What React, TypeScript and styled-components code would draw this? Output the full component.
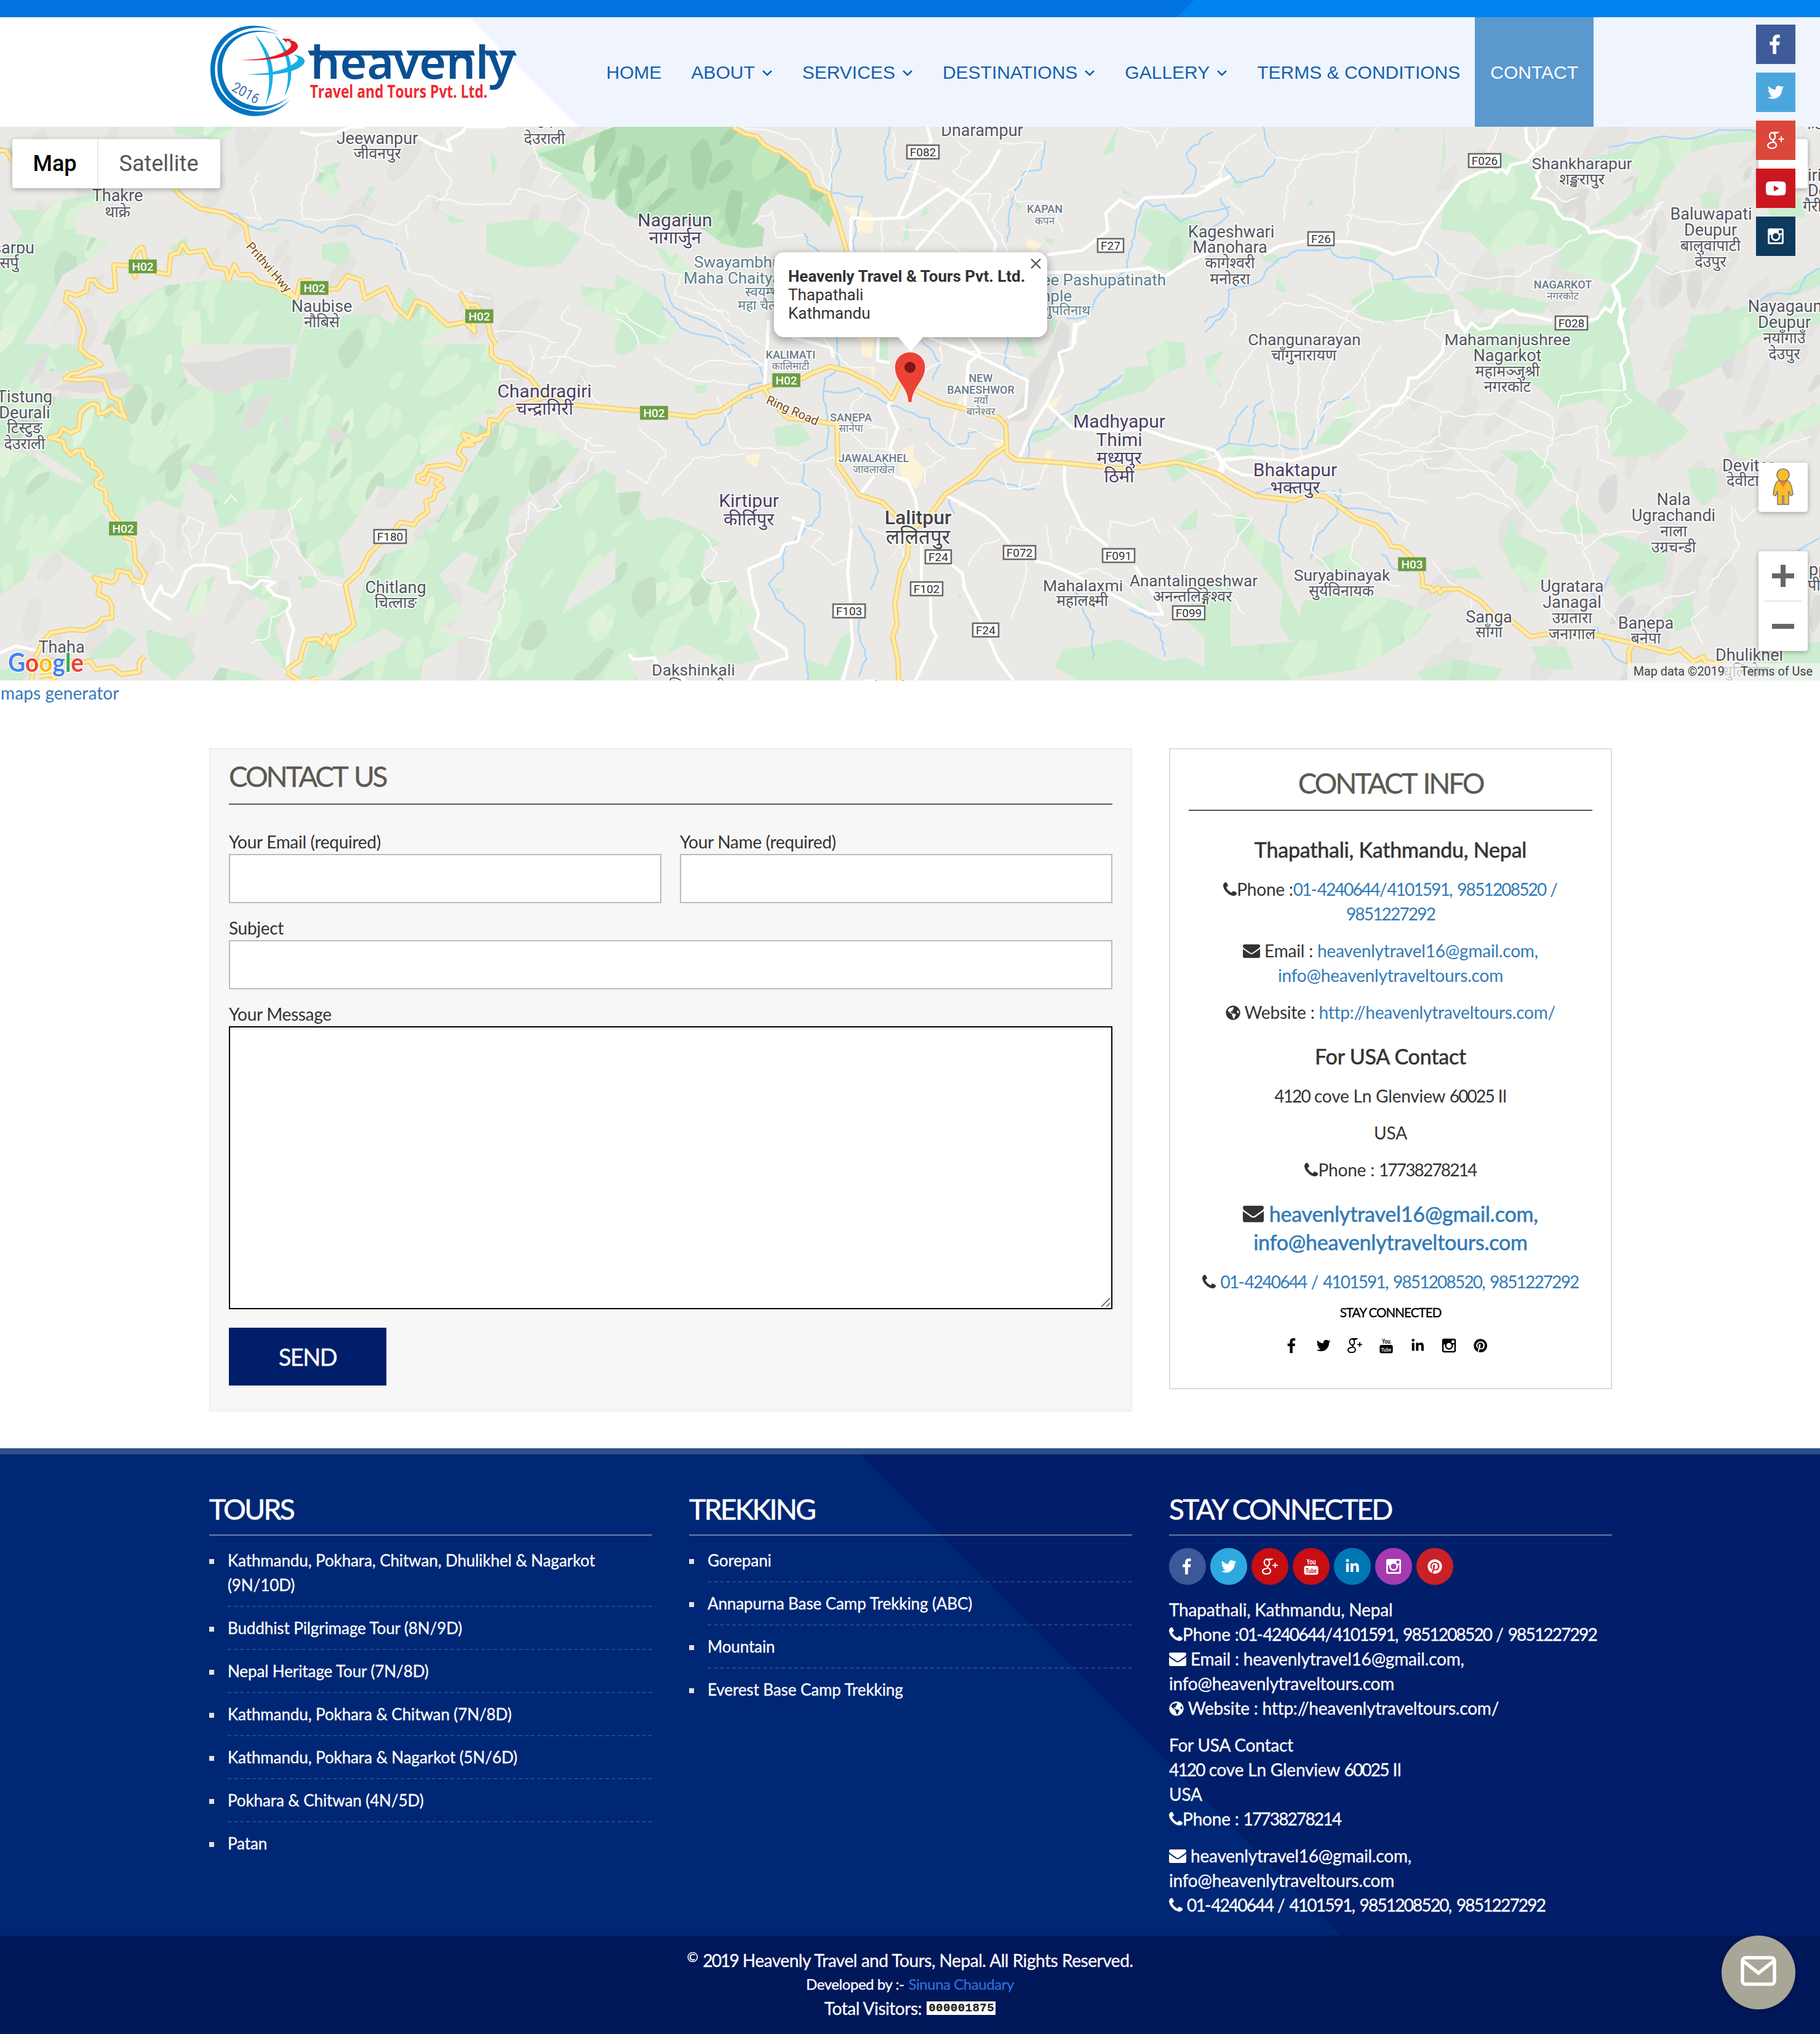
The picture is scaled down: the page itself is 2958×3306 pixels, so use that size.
import React from "react";
import styled, { createGlobalStyle } from "styled-components";
import { FaGlobeAmericas, FaLinkedinIn, FaPinterest, FaYoutube } from "react-icons/fa";

const Global = createGlobalStyle`
  *, *::before, *::after { box-sizing: border-box; }
  html, body { margin: 0; padding: 0; }
  body { font-family: Lato, "Open Sans", sans-serif; font-size: 28px; line-height: 40px; letter-spacing: -0.2px; color: #333; background: #fff; }
  a { color: #337ab7; text-decoration: none; }
  p, h2, h3, h4, ul { margin: 0; padding: 0; font-weight: 400; }
`;

/* ---------- text with tight figures ---------- */

const Figures = styled.span`
  letter-spacing: -0.065em;
`;

function Num({ children }: { children: string }) {
  return (
    <>
      {children.split(/(\d[\d]*)/).map((part, i) => (i % 2 ? <Figures key={i}>{part}</Figures> : part))}
    </>
  );
}

/* ---------- icons ---------- */

type IconName = "facebook" | "twitter" | "gplus" | "youtube" | "play" | "linkedin" | "instagram" | "pinterest" | "phone" | "envelope" | "globe";

const IconBox = styled.svg<{ $size: number; $drop?: number }>`
  width: ${(p) => p.$size}px;
  height: ${(p) => p.$size}px;
  fill: currentColor;
  vertical-align: ${(p) => p.$drop ?? -3}px;
  flex: none;
`;

function Icon({ name, size = 28 }: { name: IconName; size?: number }) {
  switch (name) {
    case "facebook":
      return (
        <IconBox $size={size} viewBox="0 0 1792 1792">
          <path d="M1343 140v264h-157q-86 0-116 36t-30 108v189h293l-39 296h-254v759h-306v-759h-255v-296h255v-218q0-186 104-288.5t277-102.5q147 0 228 12z" transform="translate(-90 -60)" />
        </IconBox>
      );
    case "twitter":
      return (
        <IconBox $size={size} viewBox="0 0 1792 1792">
          <path d="M1684 408q-67 98-162 167 1 14 1 42 0 130-38 259.5t-115.5 248.5-184.5 210.5-258 146-323 54.5q-271 0-496-145 35 4 78 4 225 0 401-138-105-2-188-64.5t-114-159.5q33 5 61 5 43 0 85-11-112-23-185.5-111.5t-73.5-205.5v-4q68 38 146 41-66-44-105-115t-39-154q0-88 44-163 121 149 294.5 238.5t371.5 99.5q-8-38-8-74 0-134 94.5-228.5t228.5-94.5q140 0 236 102 109-21 205-78-37 115-142 178 93-10 186-50z" />
        </IconBox>
      );
    case "gplus":
      return (
        <IconBox $size={size} viewBox="0 0 28 28">
          <g fill="none" stroke="currentColor" strokeWidth="2.1">
            <ellipse cx="9" cy="7.8" rx="4.2" ry="5.4" transform="rotate(-12 9 7.800)" />
            <path d="M8 2h9.500l-2.200 1.400h-3" strokeWidth="1.700" />
            <path d="M11.500 13c-2.400 2-1.200 3 .8 4.200 5 3.400 2.600 9-4 9-6.600 0-8.200-5.800-3.400-8 1.800-.8 3.600-1 5.600-1.200" />
            <path d="M22.500 8v8.500M18.200 12.200h8.600" strokeWidth="1.900" />
          </g>
        </IconBox>
      );
    case "youtube":
      return (
        <IconBox $size={size} viewBox="0 0 28 28">
          <defs>
            <mask id="tube">
              <rect width="28" height="28" fill="#fff" />
              <text x="5" y="24.500" fontSize="10.500" fontWeight="700" fontFamily="Liberation Sans, sans-serif" letterSpacing="0" textLength="18" lengthAdjust="spacingAndGlyphs" fill="#000">Tube</text>
            </mask>
          </defs>
          <text x="6.500" y="10.500" fontSize="12" fontWeight="700" fontFamily="Liberation Sans, sans-serif" letterSpacing="0" textLength="15" lengthAdjust="spacingAndGlyphs">You</text>
          <rect x="2.500" y="13" width="23" height="14.500" rx="3.500" mask="url(#tube)" />
        </IconBox>
      );
    case "instagram":
      return (
        <IconBox $size={size} viewBox="0 0 28 28">
          <path fillRule="evenodd" d="M5 2h18a3 3 0 0 1 3 3v18a3 3 0 0 1-3 3H5a3 3 0 0 1-3-3V5a3 3 0 0 1 3-3zM4.700 12v10.300a1 1 0 0 0 1 1h16.600a1 1 0 0 0 1-1V12h-2.400a7.200 7.200 0 1 1-13.800 0zM14 9.400a4.600 4.600 0 1 0 0 9.200 4.600 4.600 0 0 0 0-9.200zM19.600 4.800a1 1 0 0 0-1 1v2.800a1 1 0 0 0 1 1h2.800a1 1 0 0 0 1-1V5.800a1 1 0 0 0-1-1z" />
        </IconBox>
      );
    case "phone":
      return (
        <IconBox $size={size * 0.79} $drop={0} viewBox="0 128 1408 1408">
          <path d="M1408 1240q0 27-10 70.500t-21 68.500q-21 50-122 106-94 51-186 51-27 0-53-3.500t-57.500-12.500-47-14.500-55.500-20.500-49-18q-98-35-175-83-127-79-264-216t-216-264q-48-77-83-175-3-9-18-49t-20.500-55.500-14.500-47-12.500-57.500-3.500-53q0-92 51-186 56-101 106-122 25-11 68.500-21t70.500-10q14 0 21 3 18 6 53 76 11 19 30 54t35 63.500 31 53.500q3 4 17.500 25t21.500 35.500 7 28.500q0 20-28.500 50t-62 55-62 53-28.500 46q0 9 5 22.500t8.500 20.500 14 24 11.500 19q76 137 174 235t235 174q2 1 19 11.500t24 14 20.500 8.500 22.500 5q18 0 46-28.500t53-62 55-62 50-28.500q14 0 28.500 7t35.500 21.500 25 17.500q25 15 53.500 31t63.500 35 54 30q70 35 76 53 3 7 3 21z" />
        </IconBox>
      );
    case "envelope":
      return (
        <IconBox $size={size} viewBox="0 0 1792 1792">
          <path d="M1792 710v794q0 66-47 113t-113 47h-1472q-66 0-113-47t-47-113v-794q44 49 101 87 362 246 497 345 57 42 92.500 65.500t94.500 48 110 24.500h2q51 0 110-24.500t94.500-48 92.500-65.500q170-123 498-345 57-39 100-87zm0-294q0 79-49 151t-122 123q-376 261-468 325-10 7-42.500 31t-54 38.500-52 32.500-57.500 27-50 9h-2q-23 0-50-9t-57.500-27-52-32.500-54-38.500-42.500-31q-91-64-262-182.500t-205-142.500q-62-42-117-115.500t-55-136.500q0-78 41.500-130t118.500-52h1472q65 0 112.500 47t47.500 113z" />
        </IconBox>
      );
    case "globe":
      return <IconBox as={FaGlobeAmericas} $size={size * 0.86} $drop={-2} />;
    case "play":
      return <IconBox as={FaYoutube} $size={size * 1.15} />;
    case "linkedin":
      return <IconBox as={FaLinkedinIn} $size={size * 0.86} />;
    case "pinterest":
      return <IconBox as={FaPinterest} $size={size * 0.86} />;
  }
}

/* ---------- header ---------- */

const Page = styled.div`
  position: relative;
  width: 2958px;
  height: 3306px;
  overflow: hidden;
  display: flex;
  flex-direction: column;
`;

const TopBar = styled.div`
  height: 28px;
  flex: none;
  background: #0073e1;
  &::after {
    content: "";
    display: block;
    height: 28px;
    margin-left: 1913px;
    background: #0084ef;
    clip-path: polygon(28px 0, 100% 0, 100% 100%, 0 100%);
  }
`;

const Header = styled.header`
  height: 178px;
  flex: none;
  display: flex;
  justify-content: space-between;
  padding: 0 368px 0 339px;
  background: #f0f5fd;
  position: relative;
  isolation: isolate;
  &::before {
    content: "";
    position: absolute;
    inset: 0;
    z-index: -1;
    background: #fff;
    clip-path: polygon(0 0, 763px 0, 941px 100%, 0 100%);
  }
`;

const Logo = styled.svg`
  width: 504px;
  height: 178px;
  letter-spacing: 0;
`;

const Nav = styled.nav`
  display: flex;
  font-family: "Liberation Sans", Arial, sans-serif;
  font-size: 30px;
  letter-spacing: 0;
`;

const NavItem = styled.a<{ $active?: boolean }>`
  display: flex;
  align-items: center;
  gap: 11px;
  padding: 2px ${(p) => (p.$active ? 25 : 24)}px 0;
  white-space: nowrap;
  color: ${(p) => (p.$active ? "#fff" : "#1660ad")};
  background: ${(p) => (p.$active ? "#5a98ce" : "transparent")};
`;

const Caret = styled.svg`
  width: 18px;
  height: 12px;
  margin-top: 2px;
  fill: none;
  stroke: currentColor;
  stroke-width: 2.6px;
`;

const navItems: { label: string; menu?: boolean; active?: boolean }[] = [
  { label: "HOME" },
  { label: "ABOUT", menu: true },
  { label: "SERVICES", menu: true },
  { label: "DESTINATIONS", menu: true },
  { label: "GALLERY", menu: true },
  { label: "TERMS & CONDITIONS" },
  { label: "CONTACT", active: true },
];

function BrandLogo() {
  return (
    <Logo viewBox="27 0 1512 534">
      <defs>
        <linearGradient id="ring" x1="0" x2="1">
          <stop offset="0.500" stopColor="#0074c2" />
          <stop offset="1" stopColor="#3f9bd8" />
        </linearGradient>
      </defs>
      <path fill="url(#ring)" d="M370 74C230 -5 36 60 36 258C36 470 290 560 425 402C290 525 58 440 58 258C58 80 240 10 370 74Z" />
      <path fill="url(#ring)" d="M368 86C240 30 70 90 70 252C70 440 280 520 422 386C290 490 93 420 93 252C93 100 240 40 368 86Z" />
      <path fill="#1aade6" d="M254 86C300 160 318 220 320 268C326 330 318 380 304 430C330 380 344 320 340 262C336 200 306 140 254 86Z" />
      <path fill="#1aade6" d="M348 86C394 150 412 210 413 262C416 310 410 345 397 386C424 340 432 300 430 250C426 190 398 130 348 86Z" />
      <path fill="#e31b23" d="M183 209C300 214 440 200 463 146C462 124 448 116 420 110L436 106 384 104 408 124 410 114C434 122 434 138 422 150C370 196 280 206 183 209Z" />
      <path fill="#1aade6" d="M216 278C330 290 480 270 496 216C494 196 476 186 440 182C468 194 466 206 456 216C400 262 320 276 216 278Z" />
      <text fontFamily="Roboto, sans-serif" fontSize="70" fill="#4470b0" x="0" y="0" transform="translate(136 356) rotate(29)" textLength="140" lengthAdjust="spacingAndGlyphs">2016</text>
      <path fill="#0b4f93" d="M511 163H966L976 187H522ZM991 163H1318L1326 187H1004ZM1367 163H1426L1440 187H1382ZM1444 163H1518L1530 187H1456Z" />
      <text x="524" y="300" fontFamily="Noto Sans, sans-serif" fontWeight="600" fontSize="222" fill="#0b4f93" textLength="992" lengthAdjust="spacingAndGlyphs">heavenly</text>
      <text x="521" y="393" fontFamily="Open Sans, sans-serif" fontWeight="700" fontSize="86" fill="#f0292f" textLength="866" lengthAdjust="spacingAndGlyphs">Travel and Tours Pvt. Ltd.</text>
    </Logo>
  );
}

/* ---------- map ---------- */

const MapArea = styled.section`
  position: relative;
  height: 900px;
  flex: none;
  overflow: hidden;
  background: #eae9e6;
  font-family: Roboto, "Noto Sans", sans-serif;
  letter-spacing: 0;
`;

const MapCanvas = styled.svg`
  display: block;
  width: 2958px;
  height: 900px;
`;

type Tile = { t: string; green?: string[]; forest?: string[]; grey?: string[]; built?: string[]; yellow?: string[]; white?: string[]; thin?: string[]; water?: string[] };

const tiles: Tile[] = [
  {
    t: "translate(0 0) scale(.6378 .3571)",
    green: [
      "440,577 600,577 560,640 450,610", "130,930 230,880 300,900 200,960 190,1060 280,1100 230,1180 160,1250 120,1400 60,1568 0,1568 0,1180 60,1060 20,950 120,960",
      "820,760 870,735 850,800 868,850 850,905 805,820", "640,1280 720,1320 780,1400 760,1568 260,1568 300,1420 420,1300 560,1270", "560,1568 640,1300 700,1400 740,1568",
      "1115,955 1190,1010 1150,1015", "1240,1020 1330,1000 1420,1010 1480,1080 1430,1200 1340,1220 1240,1150", "820,1110 880,1100 895,1150 870,1210 820,1180",
      "1040,1300 1110,1440 1180,1480 1060,1568 1000,1500", "1360,690 1420,640 1568,640 1568,920 1500,900 1400,760", "1480,1300 1568,1320 1568,1440 1490,1390", "960,850 920,950 940,850", "1250,680 1270,740 1255,800",
      "660,1050 710,1030 720,1060", "430,1130 480,1070 470,1180", "790,1440 960,1430 1080,1568 760,1568",
    ],
    forest: ["1530,600 1568,577 1568,915 1510,900 1500,800 1440,770 1370,700 1450,660"],
    yellow: [
      "0,685 15,685 32,735", "445,855 460,890 510,950 570,968 625,1025 632,1095 680,1220 755,1358",
      "205,1568 215,1500 195,1410 167,1370 170,1330 195,1345 220,1325 225,1275 240,1275 250,1300 275,1325 295,1320 290,1205 330,1210 345,1260 340,1170 350,1140 362,1125 375,1200 400,1240 430,1250 435,1160 455,1150 465,1110 480,1150 520,1140 540,1215 575,1225 583,1275 597,1205 610,1250 640,1250 660,1285 700,1300 725,1330 755,1358 765,1280 790,1275 800,1318 860,1315 885,1255 920,1275 930,1360 960,1330 985,1310 1010,1400 1040,1450 1060,1370 1090,1390 1110,1430 1140,1480 1185,1465 1210,1510 1200,1430 1175,1340 1190,1385 1215,1390 1245,1480 1250,1530 1265,1568",
    ],
    white: ["765,600 800,615 850,610 890,580 930,577", "1060,620 1100,660 1150,688 1140,640 1180,600 1185,577 1290,577"],
    thin: [
      "660,790 640,860 650,960 665,1000 625,990", "845,640 810,660 800,790 770,890 770,1000 850,1000 910,975 1010,1025 1040,990 1090,890 1125,910 1210,930 1300,930 1320,860 1440,910 1470,880",
      "1110,680 1120,750 1150,820 1130,900 1110,915", "1360,660 1380,760 1430,790 1400,850", "1000,1090 1030,1160 1040,1230 1100,1260 1130,1300 1170,1330 1250,1360", "1470,900 1500,960 1490,1060 1520,1090 1568,1130",
      "1450,1390 1430,1450 1480,1500 1460,1568", "1040,1090 1035,1020", "1260,1510 1330,1510 1420,1560",
    ],
    water: ["0,672 25,680 40,740", "450,855 470,890", "525,945 570,960 605,975 625,1020 660,1045 710,1000 745,1005 820,1060 860,1030 900,1025 940,1075 1010,1110 1025,1190 1035,1225"],
  },
  {
    t: "translate(1000 0) scale(.6378 .3571)",
    green: ["100,1120 160,1160 220,1290 190,1300 130,1200", "0,1250 60,1300 120,1370 140,1568 0,1568", "745,1000 750,1080 730,1110", "790,935 800,970 775,990", "1350,945 1450,990 1500,1010 1430,1240 1340,1200 1370,1110 1330,1050", "1285,850 1330,900 1295,880", "1280,577 1270,690 1240,710", "1020,920 1040,940 1020,965", "1090,1080 1120,1090 1110,1120", "1110,1440 1130,1460 1110,1530"],
    forest: ["0,577 300,577 365,640 430,700 485,790 510,860 545,890 560,960 545,1035 515,970 470,910 415,882 375,930 355,1010 380,1040 375,1120 330,1130 275,1110 230,1050 170,1010 60,1000 30,980 0,930"],
    built: ["600,980 610,1060 655,1060 660,990 640,960 580,935", "1050,1085 1090,1110 1070,1145 1045,1120", "820,840 850,860 820,855", "895,900 910,905 905,930 890,925"],
    yellow: ["300,577 330,610 360,620 380,660 405,685 420,690 450,730 470,765 490,785 505,850 543,880 565,990 590,1145"],
    white: [
      "795,577 805,640 775,725 750,870 720,990", "600,990 650,998 740,990 845,860 910,935 970,1110 965,1145", "980,680 950,780 830,1000 765,1140", "1568,800 1480,890 1350,900 1325,945 1285,910 1250,970 1255,1050 1190,1140 1100,1160", "600,990 600,1145", "1100,1240 1240,1240 1360,1220 1400,1260 1460,1190 1568,1110", "1200,1460 1175,1480 1170,1568",
    ],
    thin: [
      "320,577 400,600 480,650 520,760 545,880", "560,577 550,720 545,860", "870,640 905,690 860,780 910,830", "980,650 1090,650 1050,780 1010,860 1030,920 1110,920 1140,1060", "1300,577 1360,600 1380,670 1410,577",
      "710,600 710,760 750,780 820,830", "680,1000 680,1145", "730,1040 820,1060 880,1145", "900,890 955,880 950,970", "0,1140 60,1210 170,1250 150,1340 290,1430", "480,1070 410,1080 400,960 350,1020", "210,1320 290,1460 370,1568", "0,1450 40,1490 60,1568", "1510,740 1545,740 1540,830 1490,850", "390,1470 390,1568", "1010,860 960,1000 1000,1145",
    ],
    water: ["560,577 575,680 550,800 548,880 630,895 620,960 605,1100 610,1145", "700,577 685,700 695,820 735,810 755,750", "1095,640 1080,775 1045,780 1010,910 1000,1100", "1500,620 1455,700 1480,770 1470,840 1440,890", "1568,940 1530,960 1480,980 1440,1010 1400,930 1370,940 1345,910 1300,1230 1235,1330 1200,1440 1150,1450", "120,1245 150,1400 240,1480 330,1568", "480,1060 490,1110 520,1145"],
  },
  {
    t: "translate(1958 0) scale(.6378 .3571)",
    green: [
      "710,770 760,690 820,740 850,800 845,900 900,950 980,1050 1100,1110 1080,1200 1040,1290 900,1220 910,1130 870,1110 790,1120 740,1170 680,1060 600,1045 610,930 650,830",
      "980,720 1050,690 1100,650 1150,620 1200,640 1290,620 1405,590 1405,640 1300,660 1230,700 1180,800 1140,920 1090,960 1060,1010 980,1040 1040,960 1090,880 1110,780 1060,720 1000,760",
      "370,1370 440,1290 500,1275 540,1330 620,1340 640,1410 560,1440 480,1460 400,1430", "640,1330 720,1310 780,1340 880,1380 860,1430 700,1400", "1040,1300 1110,1150 1160,1170 1070,1420 1000,1400",
      "1000,1420 1080,1400 1085,1568 980,1568", "1240,1440 1330,1420 1400,1380 1440,1400 1330,1568 1220,1568", "75,820 105,810 90,860 70,850", "395,1120 450,1150 430,1200 395,1170", "610,590 615,700 600,830", "270,900 280,930 262,940", "480,577 500,590 490,610", "1430,930 1520,900 1530,990 1440,985", "140,1150 185,1160 190,1200 150,1190", "190,1230 210,1330 180,1320", "1500,1290 1568,1220 1568,1300 1480,1360", "1260,880 1310,880 1310,950 1270,940",
    ],
    white: [
      "0,855 45,810", "150,1160 190,1120 260,1095 370,1100 430,1120 480,1158 540,1125 560,1050 600,950 650,830 700,785 715,780 725,765 745,785 755,765 770,790 780,750 820,735 840,690 820,640 818,577", "840,690 870,650 880,600 895,577",
      "850,740 860,760 845,800 855,850 835,900 870,910 890,930 900,970 915,995 940,1000 975,1035 980,1060 1020,1050 1050,1080 1080,1080 1110,1115 1100,1180 1085,1230 1040,1300 1055,1340 1060,1420 1055,1470 1070,1520 1070,1568",
      "640,1410 650,1480 665,1510 680,1470 700,1500 730,1490 745,1450 785,1410 800,1430 840,1440 885,1460", "975,1460 1000,1450 1020,1400 1035,1420 1050,1360 1040,1300",
    ],
    thin: [
      "130,610 60,700 30,800", "150,640 180,720 240,730 300,700 390,690 380,900 360,1080", "260,700 210,850 200,1010", "380,690 420,640 440,577", "750,577 720,690", "845,577 850,680", "870,850 920,920 950,900", "960,830 1000,870 1005,915",
      "360,980 440,1010 540,1020 560,1010", "560,1100 650,1240 620,1320 560,1200", "650,1240 720,1270 800,1260 850,1190 910,1130 960,1070", "420,1200 430,1330 370,1420 320,1568", "260,1340 340,1400 460,1480", "160,1440 200,1380 300,1400 400,1500", "1160,920 1120,1050 1090,1090", "1170,920 1110,1000", "1150,1210 1190,1250 1340,1180", "60,900 100,980", "480,1460 560,1440 640,1410",
    ],
    water: ["150,577 160,660 180,720 150,800 80,830 50,760", "0,620 20,600", "0,1050 60,980 40,900", "180,1190 220,1150 260,1140 320,1130 340,1170 380,1170 430,1190 470,1240 480,1275 540,1260 590,1260 595,1180 580,1130", "180,1190 140,1280 60,1320 60,1400 40,1450 0,1510", "1030,670 1080,650 1110,650 1170,620 1240,630 1310,590 1405,600", "1568,1220 1530,1260 1510,1330 1440,1340 1400,1380"],
  },
  {
    t: "translate(0 560) scale(.6378 .3827)",
    green: [
      "0,0 190,0 240,70 190,110 60,120 100,190 150,230 300,230 340,180 300,100 280,0 480,0 460,70 480,170 560,200 680,130 740,150 760,0 1250,0 1280,130 1260,290 1200,310 1250,370 1180,420 1060,520 1040,620 960,600 900,760 860,840 880,990 830,980 770,900 740,700 640,700 600,760 560,780 540,640 480,560 460,700 400,660 360,700 330,760 260,700 200,560 100,450 0,430",
      "0,440 80,470 150,560 220,600 250,700 330,860 340,960 240,980 150,880 90,900 60,1000 0,1060", "1270,320 1400,370 1480,440 1420,570 1300,700 1290,900 1240,1060 1190,1020 1220,900 1180,880 1120,980 1180,1140 1130,1200 1040,1260 980,1210 880,1290 840,1400 760,1427 790,1260 900,1200 930,1000 980,890 1040,860 1120,740 1180,560",
      "1340,820 1440,640 1540,530 1568,560 1568,860 1450,1060 1430,1160 1330,1250 1260,1427 1240,1300 1290,1000", "1300,1280 1400,1180 1568,1000 1568,1427 1240,1427", "470,1130 500,1020 550,980 510,1150", "590,940 700,850 690,990 620,1000", "640,1060 690,1100 650,1230 700,1350 740,1400 700,1200 740,1100 640,1000", "370,1210 470,1250 500,1330 440,1427 380,1340", "300,1200 350,1250 300,1330 220,1340", "560,1370 640,1400 680,1427 540,1427", "900,1390 1100,1210 1190,1240 1080,1340 1070,1427 860,1427", "0,1380 60,1360 60,1427 0,1427", "760,985 815,985 800,1030 770,1040",
    ],
    grey: ["460,80 560,70 650,20 740,10 740,140 660,150 580,210 520,180", "610,380 640,240 700,200 660,340", "830,370 860,350 890,390 850,430", "130,190 200,140 320,110 340,180 230,210", "70,180 90,80 130,10 110,120", "720,300 740,310 735,380", "470,500 540,520 560,600 500,560"],
    yellow: [
      "205,0 205,20 225,50 240,60 258,85 225,100 200,120 180,125 165,145 200,150 240,145 265,155 270,180 280,220 305,240 310,280 320,310 300,295 285,270 265,290 250,295 250,260 235,250 215,270 205,290 200,360 180,375 160,355 150,385 125,395 160,410 165,440 180,470 195,450 210,450 215,480 235,500 235,520 250,530 260,560 245,580 245,600 270,620 270,670 280,680 285,720 300,745 315,800 320,820 340,830 345,920 355,940 370,980 362,1010 340,1000 330,970 300,960 295,1000 285,1010 240,990 255,1020 250,1060 275,1080 285,1110 285,1160 260,1165 250,1190 215,1215 180,1210 130,1225 110,1260 90,1330 80,1427",
      "80,1350 150,1340 210,1350 230,1345 245,1380 285,1370 310,1400 355,1390 355,1350 368,1325", "130,1427 150,1400 100,1410",
      "1252,0 1252,45 1270,70 1300,80 1310,100 1350,140 1385,220 1450,255 1568,272",
      "1385,225 1330,255 1290,280 1270,325 1248,320 1245,380 1230,385 1215,400 1180,380 1190,410 1225,400 1180,420 1205,425 1175,430 1168,460 1185,490 1175,530 1140,510 1090,520 1080,550 1065,560 1065,580 1085,590 1095,550 1125,570 1110,590 1130,605 1110,620 1105,655 1085,665 1090,710 1065,740 1055,765 1020,755 1000,800 965,850 940,890 920,960 880,1020 890,1100 902,1190 880,1225 860,1240 850,1290 850,1240 840,1270 830,1235 825,1275 810,1250 780,1255 770,1300 765,1340 735,1375 735,1400 765,1427", "790,1427 808,1415",
    ],
    white: ["345,1010 360,1020 370,1080 390,1120 400,1130 435,1170", "385,1110 395,1070 410,1025 415,1055 440,1070 455,1040 475,960 495,938 535,935 580,950 585,1010 615,1010 640,1035 650,1025 665,1000 700,1010 680,1030 700,1065 735,1080 740,1110 730,1130 748,1210 735,1300 730,1400", "0,1310 40,1280 95,1300"],
    thin: [
      "385,790 415,850 420,920 395,930", "420,920 440,955", "490,910 480,830 465,800 480,730 520,760 500,850 485,870", "520,930 525,860 555,800 615,800 630,900 630,980 690,990", "770,650 735,700 745,780 730,820 690,830 710,890 705,950", "730,820 770,900 800,960 820,1005 880,1020", "570,680 590,640 605,670",
      "1350,0 1360,60 1345,150", "1568,95 1500,90 1430,50 1400,120", "1400,0 1380,60 1440,50 1460,0", "1420,300 1440,350 1510,430 1540,430", "1480,130 1520,240 1550,290", "1510,470 1490,550 1410,640 1430,690 1370,710 1350,670 1340,790 1290,820 1315,890 1290,930 1285,1080 1265,1200 1250,1260 1190,1245", "1250,1260 1240,1360 1220,1427", "725,1130 690,1160 685,1240 640,1270", "1510,390 1490,440 1510,460 1568,460", "1280,80 1275,150 1320,150",
    ],
  },
  {
    t: "translate(1000 500) scale(.6378 .4082)",
    green: [
      "0,740 70,730 60,800 80,850 130,830 210,880 270,940 230,960 220,1080 300,1090 320,1160 370,1220 330,1270 370,1400 290,1427 180,1340 90,1410 30,1385 60,1485 0,1485",
      "0,0 70,10 150,60 160,100 60,110 50,170 20,190 0,180", "405,480 470,460 500,520 460,555 410,550", "200,310 235,305 235,340 205,340", "675,120 695,120 695,220 672,215", "575,1310 600,1290 595,1400 570,1485 490,1485 490,1400 540,1430", "1020,130 1060,120 1075,200 1040,190", "1110,50 1125,70 1115,110",
      "1060,490 1130,470 1200,370 1290,300 1300,240 1360,230 1350,180 1400,130 1450,140 1455,230 1390,270 1350,330 1240,380 1160,460 1090,530 1060,540", "1440,860 1485,800 1480,880 1440,890", "1400,620 1500,560 1510,610 1420,700", "1340,735 1355,735 1350,770", "895,1190 925,1240 905,1220", "740,480 760,480 755,500", "1140,1360 1200,1350 1290,1320 1400,1410 1450,1390 1510,1440 1530,1485 1180,1485 1120,1430", "1490,1080 1568,1080 1568,1370 1510,1320 1440,1230 1440,1190 1510,1170", "1320,1130 1350,1200 1330,1190", "875,1140 885,1150 872,1160", "285,1130 305,1150 290,1160", "405,1115 425,1120 415,1145",
    ],
    grey: ["1135,50 1160,80 1150,180 1110,220 1090,330 1050,450 990,455 1010,420 1040,350 1060,260 1100,190"],
    built: ["735,560 760,545 760,600 790,640 770,720 730,690 720,620", "625,120 660,120 655,200 630,190", "330,590 370,580 360,640 335,610", "615,50 660,120 620,130", "870,760 895,780 875,800", "700,1000 730,930 710,990", "960,540 1000,530 980,570", "1095,570 1115,570 1100,640", "850,480 880,350 890,360 840,510", "1100,380 1140,345 1120,400", "650,230 665,240 655,290"],
    yellow: [
      "0,403 60,410 200,435 225,418 265,412 330,345 380,318 480,280 495,265 545,235 590,250 670,310 705,365 725,300", "765,330 830,380 890,403 975,435 995,470 998,580 1020,605 1140,618 1280,640 1350,635 1430,615 1470,630 1540,665 1568,700",
      "380,318 395,370 440,440 525,455 565,465 567,625 620,745 680,775 715,830 750,880 745,990 728,1045 712,1180 718,1260 707,1310 720,1400 722,1485", "998,550 950,600 915,665 840,745 805,820 760,880",
    ],
    white: [
      "1145,625 1145,700 1150,740 1190,870 1255,950", "1100,385 1165,480 1240,490 1350,485 1410,520 1530,570 1545,610 1568,600", "1530,570 1550,640 1540,670", "845,750 940,830 970,870 1005,940", "1070,1010 1105,1020 1165,1060 1300,1170 1360,1220 1395,1220 1375,1150 1325,1030", "390,50 385,200 380,318", "450,118 550,160 555,200", "710,365 695,390 720,480 700,560 710,580", "625,740 660,670", "710,670 745,690 765,760 770,830", "602,880 592,1050 600,1180", "600,1236 605,1340 580,1485", "780,940 780,1090", "803,1148 805,1270 818,1310 765,1485", "855,1020 885,1060 890,1120 920,1210 950,1310 975,1400 1015,1485",
      "450,835 480,850 465,930 430,945 420,985 340,1040 350,1150 365,1220 355,1280 435,1360 438,1395 360,1430 340,1485", "35,1380 45,1400 100,1395 110,1430 150,1450 180,1485", "800,120 920,190 1050,290 1045,400 1000,440", "900,120 930,180 900,220 890,400", "670,120 668,210 700,220", "1170,60 1165,160 1130,180 1140,250 1100,380 1060,480 1030,600",
    ],
    thin: [
      "180,0 260,60 300,180 380,230", "190,260 240,210 370,230", "100,200 180,280 340,310", "60,480 130,570 80,700 30,650", "260,350 290,470 320,560 400,560 470,610", "120,750 200,600 330,580", "470,620 600,590", "400,630 440,700 500,720", "540,640 590,740 600,870", "640,480 690,480 690,560", "600,500 640,560 700,570", "790,540 840,600 790,640 790,700", "900,480 950,520 1000,530", "980,640 1000,720 1030,720 1040,640", "480,870 530,900 500,950 555,1025 590,1000", "640,880 720,930 740,1000 760,1060", "900,1030 930,950 980,920", "1010,1240 1040,1100 1050,1000", "1100,870 1110,1000", "1150,940 1160,870 1200,890", "1260,930 1260,850 1320,870 1370,840 1390,900", "1530,590 1450,630 1500,700 1568,800", "1100,620 1080,700 1030,720", "1160,1070 1230,1040 1300,1100 1330,1150", "1420,870 1470,960 1450,1040", "830,120 830,220 790,250", "870,160 940,180 1040,200", "220,900 260,980 220,1060 240,1100 290,1090", "1440,1210 1400,1270 1370,1250", "0,0 60,70 130,120", "530,120 600,240 650,240", "640,330 600,400 620,450 680,480", "870,420 850,520 880,560 920,560",
    ],
    water: ["565,118 570,240 535,280 530,330 540,450 540,560 480,620 475,690 520,740 520,830 430,960 425,1050 390,1100 410,1160 480,1260 490,1485", "530,330 570,340 620,320 700,390 760,420 800,440 810,490 860,550 895,540 900,500 930,490", "1230,330 1290,270 1220,360 1130,430 1110,480 1060,510 1050,600", "120,0 180,90 260,120 330,180 370,240 380,300 340,310 350,360 300,370 280,450 240,540 220,550 180,450", "850,740 900,700 960,680 1050,725 1070,720", "640,1190 620,1270 640,1400 620,1470", "1170,1130 1200,1230 1220,1290 1215,1400", "1000,120 990,220 1040,280", "1310,1200 1370,1240 1390,1300 1400,1390", "850,750 865,820", "620,870 655,960 670,1050 650,1120", "780,130 830,220 810,290"],
  },
  {
    t: "translate(1958 500) scale(.6378 .4082)",
    green: [
      "680,60 870,70 1060,60 1080,170 1070,330 900,400 860,330 800,270 690,200 660,120", "1070,60 1100,330 1200,440 1240,500 1180,560 1100,600 1040,590 1020,480 1030,400 960,330", "380,20 640,10 560,50 440,55", "75,830 100,815 150,920 190,950 200,1100 230,1200 260,1300 220,1330 190,1260 200,1130 140,1020 80,900",
      "750,570 840,570 900,640 860,740 820,800 790,740 800,630", "905,840 940,780 1000,870 1000,900 920,900", "1000,920 1050,905 1180,970 1170,1090 1080,1130 1060,1160 1030,1070 1060,980", "780,830 790,900 870,960 880,1040 840,1140 780,1040 760,940", "160,410 230,420 230,520 190,490", "365,375 385,380 375,480 340,545 280,545 310,490", "1160,1240 1240,1140 1250,1260 1200,1290", "1230,640 1300,640 1310,740 1270,790 1240,730",
      "0,1290 60,1350 150,1340 230,1330 250,1170 350,1140 480,1160 580,1220 540,1300 440,1400 390,1440 200,1485 0,1485", "540,1450 640,1400 760,1440 740,1485 560,1485", "830,1350 920,1350 940,1440 860,1440", "620,1050 690,1030 710,1080 640,1080", "1320,500 1430,480 1568,380 1568,460 1420,560 1400,620 1340,570", "1310,80 1568,10 1568,60 1400,120 1340,200 1290,260 1180,330 1200,180", "1350,1400 1568,1330 1568,1485 1340,1485", "0,200 50,170 20,260 50,320 10,290", "50,545 120,560 130,590 50,590", "280,1010 370,940 400,1040 330,1060",
    ],
    yellow: ["0,645 40,670 80,710 130,750 230,768 265,748 305,750 385,840 435,865 460,905 475,950 500,955 525,990 550,1040 555,1080 555,1110 575,1115 580,1130 595,1115 600,1135 610,1120 650,1120 700,1165 740,1230 780,1245 830,1310 870,1300 1000,1303 1100,1340 1185,1375 1210,1360 1245,1410 1270,1390 1275,1410 1320,1420", "1090,1345 1080,1370 1083,1430"],
    white: ["640,10 640,60 660,80 665,105", "610,130 605,180 570,240 540,280 520,280 515,330 490,385 450,395 345,550 290,580 220,610 115,595 45,608 25,570 0,555", "45,610 60,640 95,665 130,670", "45,610 35,665", "1070,0 1060,40 1075,150 1080,180 1060,230 1070,300 1070,330"],
    thin: [
      "70,120 80,30 60,0", "140,150 80,260 40,400", "230,130 240,300 230,420 250,610", "160,220 180,420 200,610", "330,160 300,300 280,540", "400,250 420,400 330,440", "450,150 390,300 300,430", "580,0 560,80 610,130", "650,160 540,320 430,480", "500,350 640,430 740,420 820,490 880,520", "800,370 880,430 890,500 860,640", "600,430 600,510 540,560 390,490", "390,590 550,570 700,560 830,490", "390,600 470,650 580,600", "600,540 650,580 740,700 780,760 850,890 930,900 970,960 1020,900 1130,890", "550,590 570,640 700,650 740,670", "470,650 470,750 570,780", "900,400 910,350 1000,330 1070,330", "1070,340 1090,370 1050,400 1020,490 1030,560", "1000,470 1000,600 1050,640", "880,530 1000,470", "640,760 700,740 780,800", "300,740 410,740 520,860 510,920", "400,870 370,990 420,1080 500,1110", "960,960 990,1060 1020,1200 1060,1260", "1250,1130 1170,1160 1090,1290", "1280,1190 1240,1240 1270,1340", "1340,790 1360,960 1280,1120", "960,940 950,740 900,700 880,640 830,560", "20,820 120,840 50,1000 40,1100 100,1220", "290,860 270,960 320,1050", "1430,600 1460,560 1545,510", "1350,800 1370,850 1420,780 1480,770", "580,1010 620,1090 680,1150 680,1240",
    ],
    water: ["20,580 60,540 80,440 110,390", "60,540 260,560 290,470 310,380 370,355", "110,540 130,390 150,370", "210,780 190,900 200,970 225,1000", "0,640 120,740 180,720 330,730 350,790 470,820 490,860", "345,720 340,820 290,900 270,1000", "450,980 480,1040 520,1050", "1568,915 1530,950 1510,970", "980,1110 1000,1180 1030,1070", "1000,1270 1050,1400 1080,1420", "0,60 50,0"],
  },
];

function rng(seed: number) {
  let s = seed;
  return () => {
    s = (s * 1664525 + 1013904223) % 4294967296;
    return s / 4294967296;
  };
}

function ridges(seed: number, n: number, box: [number, number, number, number], size: number) {
  const r = rng(seed);
  let d = "";
  for (let i = 0; i < n; i++) {
    const cx = box[0] + r() * box[2];
    const cy = box[1] + r() * box[3];
    const a = -1.1 + (r() - 0.5) * 0.9;
    const len = size * (0.5 + r());
    const wid = len * (0.2 + r() * 0.35);
    const pts: [number, number][] = [];
    for (let k = 0; k < 10; k++) {
      const t = (k / 10) * Math.PI * 2;
      const m = 0.65 + r() * 0.5;
      const px = Math.cos(t) * len * m;
      const py = Math.sin(t) * wid * m;
      pts.push([cx + px * Math.cos(a) - py * Math.sin(a), cy + px * Math.sin(a) + py * Math.cos(a)]);
    }
    pts.forEach((p, k) => {
      const q = pts[(k + 1) % pts.length];
      const mid = `${((p[0] + q[0]) / 2).toFixed(0)} ${((p[1] + q[1]) / 2).toFixed(0)}`;
      d += k ? `Q${p[0].toFixed(0)} ${p[1].toFixed(0)} ${mid}` : `M${mid}`;
    });
    d += "Z";
  }
  return d;
}

/* Breaks the segments of a lane into small irregular steps. */
function wiggle(points: string, seed: number, amp: number) {
  const r = rng(seed * 7919 + 13);
  const pts = points.split(" ").map((p) => p.split(",").map(Number));
  const out: string[] = [];
  pts.forEach((p, i) => {
    out.push(p.join(","));
    const q = pts[i + 1];
    if (!q) return;
    const steps = Math.floor(Math.hypot(q[0] - p[0], q[1] - p[1]) / 18);
    for (let k = 1; k < steps; k++) {
      const f = k / steps;
      out.push(`${(p[0] + (q[0] - p[0]) * f + (r() - 0.5) * amp).toFixed(1)},${(p[1] + (q[1] - p[1]) * f + (r() - 0.5) * amp * 1.6).toFixed(1)}`);
    }
  });
  return out.join(" ");
}

const Land = styled.polygon<{ $fill: string }>`
  fill: ${(p) => p.$fill};
`;

const Way = styled.polyline<{ $color: string; $w: number }>`
  fill: none;
  stroke: ${(p) => p.$color};
  stroke-width: ${(p) => p.$w}px;
  stroke-linejoin: round;
  vector-effect: non-scaling-stroke;
`;

const LabelText = styled.text<{ $size: number; $color: string; $weight?: number }>`
  font-family: Roboto, "Noto Sans", sans-serif;
  font-size: ${(p) => p.$size}px;
  font-weight: ${(p) => p.$weight ?? 400};
  fill: ${(p) => p.$color};
  stroke: rgba(255, 255, 255, 0.85);
  stroke-width: 4px;
  stroke-linejoin: round;
  paint-order: stroke;
`;

const town = "#53565f";
const city = "#4b3f63";
const sight = "#5e7e8c";
const quarter = "#6b7a89";

type Label = [number, number, string, number?, string?, number?, ("start" | "middle" | "end")?];

const labels: Label[] = [
  [613, 234, "Jeewanpur"], [613, 258, "जीवनपुर", 25], [885, 208, "उन", 25], [885, 234, "देउराली", 25],
  [191, 327, "Thakre"], [191, 353, "थाक्रे", 25], [56, 412, "sarpu", 27, town, 400, "end"], [15, 436, "सर्पु", 25],
  [523, 507, "Naubise"], [523, 532, "नौबिसे", 25],
  [40, 654, "Tistung"], [40, 680, "Deurali"], [40, 704, "टिस्टुङ", 25], [40, 730, "देउराली", 25],
  [885, 646, "Chandragiri", 30, city], [885, 674, "चन्द्रागिरी", 29, city],
  [643, 964, "Chitlang"], [643, 988, "चित्लाङ", 25], [100, 1061, "Thaha"],
  [1097, 368, "Nagarjun", 30, city], [1097, 396, "नागार्जुन", 29, city],
  [1128, 435, "Swayambhu", 26, sight, 400, "start"], [1111, 461, "Maha Chaitya", 26, sight, 400, "start"], [1211, 482, "स्वयम्भू", 22, sight, 400, "start"], [1199, 504, "महा चैत्य", 22, sight, 400, "start"],
  [1698, 346, "KAPAN", 18, quarter, 500], [1698, 365, "कपन", 17, quarter], [1596, 221, "Dharampur"],
  [1895, 464, "Shree Pashupatinath", 26, sight, 400, "end"], [1742, 490, "Temple", 26, sight, 400, "end"], [1772, 512, "पशुपतिनाथ", 22, sight, 400, "end"],
  [2001, 386, "Kageshwari"], [1999, 411, "Manohara"], [1999, 436, "कागेश्वरी", 25], [1999, 462, "मनोहरा", 25],
  [2571, 275, "Shankharapur", 26.5], [2571, 300, "शङ्खरापुर", 25],
  [2781, 357, "Baluwapati"], [2780, 383, "Deupur"], [2780, 408, "बालुवापाटी", 25], [2780, 434, "देउपुर", 25],
  [2540, 469, "NAGARKOT", 18, quarter, 500], [2540, 487, "नगरकोट", 17, quarter],
  [2901, 507, "Nayagaun"], [2900, 533, "Deupur"], [2900, 558, "नयाँगाउँ", 25], [2900, 584, "देउपुर", 25],
  [2938, 294, "iri", 27, town, 400, "start"], [2938, 319, "Deu", 27, town, 400, "start"], [2930, 344, "गैरी", 25, town, 400, "start"], [2930, 210, "फट", 25, town, 400, "start"],
  [2120, 561, "Changunarayan", 26.5], [2119, 586, "चाँगुनारायण", 25],
  [2450, 561, "Mahamanjushree", 26.5], [2450, 587, "Nagarkot"], [2450, 612, "महामञ्जुश्री", 25], [2450, 637, "नगरकोट", 25],
  [2105, 774, "Bhaktapur", 30, city], [2105, 802, "भक्तपुर", 29, city],
  [2181, 944, "Suryabinayak", 26.5], [2180, 969, "सुर्यविनायक", 25],
  [2555, 962, "Ugratara"], [2555, 988, "Janagal"], [2555, 1013, "उग्रतारा", 25], [2555, 1039, "जनागाल", 25],
  [2420, 1012, "Sanga"], [2420, 1036, "साँगा", 25], [2675, 1022, "Banepa"], [2675, 1046, "बनेपा", 25],
  [2720, 821, "Nala"], [2720, 847, "Ugrachandi"], [2720, 872, "नाला", 25], [2720, 898, "उग्रचन्डी", 25],
  [2799, 766, "Devitar", 27, town, 400, "start"], [2806, 790, "देवीटार", 25, town, 400, "start"],
  [2788, 1074, "Dhulikhel", 27, town, 400, "start"], [2800, 1100, "धुलिखेल", 25, town, 400, "start"], [2940, 935, "pp", 27, town, 400, "start"], [2938, 960, "पी", 25, town, 400, "start"],
  [1285, 583, "KALIMATI", 18, quarter, 500], [1285, 601, "कालिमाटी", 17, quarter], [1383, 685, "SANEPA", 18, quarter, 500], [1383, 702, "सानेपा", 17, quarter],
  [1594, 621, "NEW", 18, quarter, 500], [1594, 640, "BANESHWOR", 18, quarter, 500], [1594, 657, "नयाँ", 17, quarter], [1594, 675, "बानेश्वर", 17, quarter],
  [1420, 751, "JAWALAKHEL", 18, quarter, 500], [1420, 769, "जावलाखेल", 17, quarter],
  [1819, 695, "Madhyapur", 30, city], [1819, 725, "Thimi", 30, city], [1819, 754, "मध्यपुर", 29, city], [1819, 784, "ठिमी", 29, city],
  [1217, 824, "Kirtipur", 30, city], [1217, 854, "कीर्तिपुर", 29, city],
  [1492, 852, "Lalitpur", 32, "#41444c", 500], [1492, 884, "ललितपुर", 33, "#41444c"],
  [1760, 961, "Mahalaxmi", 26.5], [1759, 985, "महालक्ष्मी", 25], [1940, 953, "Anantalingeshwar", 26], [1938, 978, "अनन्तलिङ्गेश्वर", 25],
  [1127, 1098, "Dakshinkali", 26.5], [1126, 1124, "दक्षिणकाली", 25], [1450, 1126, "Thecho"],
];

const shields: [number, number, string][] = [
  [232, 433, "H02"], [511, 468, "H02"], [779, 514, "H02"], [200, 859, "H02"], [1278, 618, "H02"], [1063, 671, "H02"], [2295, 917, "H03"],
  [634, 872, "F180"], [1805, 399, "F27"], [1500, 247, "F082"], [2413, 261, "F026"], [2147, 388, "F26"], [2554, 525, "F028"], [1525, 905, "F24"], [1657, 898, "F072"], [1818, 903, "F091"],
  [1506, 957, "F102"], [1380, 993, "F103"], [1602, 1024, "F24"], [1932, 996, "F099"],
];

function Shield({ x, y, code }: { x: number; y: number; code: string }) {
  const highway = code[0] === "H";
  const w = highway ? 45 : code.length === 4 ? 52 : 42;
  return (
    <g>
      <rect x={x - w / 2} y={y - 11} width={w} height={22} fill={highway ? "#6b9e43" : "#fff"} stroke={highway ? "#6b9e43" : "#666"} strokeWidth={highway ? 0.5 : 2.5} />
      <text x={x} y={y + 7} textAnchor="middle" fontFamily="Roboto, sans-serif" fontSize="19" fontWeight={highway ? 500 : 400} fill={highway ? "#fff" : "#333"}>{code}</text>
    </g>
  );
}

function Terrain() {
  return (
    <MapCanvas viewBox="0 206 2958 900">
      <defs>
        <clipPath id="hills">
          {tiles.flatMap((tile, i) => (tile.green ?? []).map((pts, k) => <polygon key={`${i}-${k}`} points={pts} transform={tile.t} />))}
        </clipPath>
        <clipPath id="woods">
          {tiles.flatMap((tile, i) => (tile.forest ?? []).map((pts, k) => <polygon key={`${i}-${k}`} points={pts} transform={tile.t} />))}
        </clipPath>
      </defs>
      <rect y="206" width="2958" height="900" fill="#eae9e6" />
      <path d={ridges(3, 90, [0, 206, 950, 900], 38)} fill="#e4e3e0" />
      <path d={ridges(5, 75, [2300, 206, 658, 900], 40)} fill="#e4e3e0" />
      <path d={ridges(9, 22, [2550, 206, 408, 900], 26)} fill="#dddcda" />
      {tiles.map((tile, i) => (
        <g key={i} transform={tile.t}>
          {tile.green?.map((p, k) => <Land key={k} points={p} $fill="#cdedd0" />)}
          {tile.forest?.map((p, k) => <Land key={k} points={p} $fill="#b6e1b8" />)}
          {tile.built?.map((p, k) => <Land key={k} points={p} $fill="#fdf3d6" />)}
        </g>
      ))}
      <g clipPath="url(#hills)">
        <path d={ridges(11, 200, [0, 206, 1250, 900], 40)} fill="#d7f2d5" />
        <path d={ridges(12, 75, [0, 206, 1250, 900], 28)} fill="#e1f4da" />
        <path d={ridges(13, 80, [0, 206, 1250, 900], 30)} fill="#c4e1c5" />
        <path d={ridges(14, 80, [1800, 206, 1158, 900], 44)} fill="#d7f2d5" />
        <path d={ridges(15, 40, [1800, 206, 1158, 900], 26)} fill="#c8e8ca" />
      </g>
      <g clipPath="url(#woods)">
        <path d={ridges(21, 36, [980, 206, 400, 420], 34)} fill="#c2e8be" />
        <path d={ridges(22, 30, [980, 206, 400, 420], 34)} fill="#a9d4ab" />
      </g>
      {tiles.map((tile, i) => (
        <g key={i} transform={tile.t}>
          {tile.grey?.map((p, k) => <Land key={k} points={p} $fill="#dfdedd" />)}
          {tile.water?.map((p, k) => <Way key={k} points={wiggle(p, k + 3, 9)} $color="#aad7fb" $w={2.6} />)}
          {tile.thin?.map((p, k) => <Way key={k} points={wiggle(p, k + 40, 9)} $color="#fbfbfa" $w={2} />)}
          {tile.white?.map((p, k) => <Way key={k} points={p} $color="#fff" $w={5} />)}
        </g>
      ))}
      {tiles.map((tile, i) => (
        <g key={i} transform={tile.t}>
          {tile.yellow?.map((p, k) => <Way key={k} points={p} $color="#f5cd6b" $w={8.5} />)}
        </g>
      ))}
      {tiles.map((tile, i) => (
        <g key={i} transform={tile.t}>
          {tile.yellow?.map((p, k) => <Way key={k} points={p} $color="#ffeba6" $w={5} />)}
        </g>
      ))}
      {labels.map(([x, y, text, size = 27, color = town, weight = 400, anchor = "middle"], i) => (
        <LabelText key={i} x={x} y={y} textAnchor={anchor} $size={size} $color={color} $weight={weight}>{text}</LabelText>
      ))}
      <LabelText x={0} y={0} transform="translate(399 401) rotate(49)" $size={20} $color="#7b4a12">Prithvi Hwy</LabelText>
      <LabelText x={0} y={0} transform="translate(1244 655) rotate(24)" $size={20} $color="#7b4a12">Ring Road</LabelText>
      {shields.map(([x, y, code], i) => <Shield key={i} x={x} y={y} code={code} />)}
      <path d="M1476 654C1475 628 1454 620 1454 597A25 25 0 0 1 1504 597C1504 620 1483 628 1482 654Z" fill="#ea4335" stroke="#fff" strokeWidth="1" />
      <circle cx="1479" cy="597" r="9" fill="#7f1411" />
      <text x="13" y="1092" fontFamily="Lato, sans-serif" fontSize="42" stroke="#fff" strokeWidth="3" paintOrder="stroke" textLength="123" lengthAdjust="spacingAndGlyphs">
        <tspan fill="#4285f4" fontWeight="700">G</tspan><tspan fill="#ea4335" fontWeight="700">o</tspan><tspan fill="#fbbc05" fontWeight="700">o</tspan><tspan fill="#4285f4" fontWeight="700">g</tspan><tspan fill="#34a853" fontWeight="700">l</tspan><tspan fill="#ea4335" fontWeight="700">e</tspan>
      </text>
    </MapCanvas>
  );
}

/* Controls float over the map canvas. */
const Floating = styled.div<{ $x: number; $y: number; $w: number; $h: number }>`
  position: absolute;
  left: ${(p) => p.$x}px;
  top: ${(p) => p.$y}px;
  width: ${(p) => p.$w}px;
  height: ${(p) => p.$h}px;
  display: flex;
  background: #fff;
  border-radius: 4px;
  box-shadow: 0 2px 8px rgba(0, 0, 0, 0.3);
`;

const MapType = styled.button<{ $on?: boolean; $w: number }>`
  width: ${(p) => p.$w}px;
  border: 0;
  padding: ${(p) => (p.$on ? "0" : "0 2px 0 0")};
  background: none;
  border-left: ${(p) => (p.$on ? "0" : "2px solid #e8e8e8")};
  font: ${(p) => (p.$on ? 500 : 400)} 36px Roboto, sans-serif;
  color: ${(p) => (p.$on ? "#000" : "#565656")};
`;

const ZoomStack = styled.div`
  flex: 1;
  display: flex;
  flex-direction: column;
  align-items: center;
`;

const ZoomKey = styled.svg`
  width: 36px;
  height: 80px;
  fill: #666;
`;

const ZoomRule = styled.div`
  width: 60px;
  height: 2px;
  background: #e6e6e6;
`;

const Pegman = styled.svg`
  margin: auto;
  width: 36px;
  height: 62px;
`;

const InfoWindow = styled.div`
  position: absolute;
  left: 1258px;
  top: 204px;
  width: 444px;
  height: 138px;
  padding: 24px 23px;
  border-radius: 16px;
  background: #fff;
  box-shadow: 0 4px 14px 2px rgba(0, 0, 0, 0.3);
  font-size: 26px;
  line-height: 30px;
  color: #333;
  &::after {
    content: "";
    position: absolute;
    left: 201px;
    top: 137px;
    width: 42px;
    height: 24px;
    background: #fff;
    clip-path: polygon(0 0, 100% 0, 50% 100%);
  }
`;

const InfoTitle = styled.strong`
  display: block;
  font-weight: 700;
  white-space: nowrap;
`;

const InfoClose = styled.svg`
  position: absolute;
  right: 10px;
  top: 10px;
  width: 17px;
  height: 17px;
  stroke: #555;
  stroke-width: 2.4px;
`;

const MapTerms = styled.div`
  position: absolute;
  right: 0;
  bottom: 0;
  height: 28px;
  display: flex;
  gap: 26px;
  padding: 0 12px 0 10px;
  background: rgba(245, 245, 245, 0.72);
  font-size: 19.8px;
  line-height: 28px;
  color: #444;
`;

const MapCredit = styled.a`
  display: block;
  height: 40px;
  flex: none;
  padding-left: 1px;
  letter-spacing: 0.1px;
`;

/* ---------- side share bar ---------- */

const ShareBar = styled.div`
  position: absolute;
  right: 40px;
  top: 40px;
  display: flex;
  flex-direction: column;
  gap: 14px;
`;

const ShareButton = styled.a<{ $bg: string }>`
  display: flex;
  align-items: center;
  justify-content: center;
  width: 64px;
  height: 64px;
  color: #fff;
  background: ${(p) => p.$bg};
`;

/* ---------- contact ---------- */

const Columns = styled.main`
  display: flex;
  align-items: flex-start;
  gap: 60px;
  flex: none;
  height: 1208px;
  padding: 70px 338px 0 340px;
`;

const FormPanel = styled.div`
  width: 1500px;
  height: 1078px;
  padding: 12px 30px 0;
  border: 2px solid #eee;
  background: #f7f7f7;
`;

const PanelTitle = styled.h2<{ $center?: boolean }>`
  height: 78px;
  font-size: 46px;
  line-height: ${(p) => (p.$center ? 66 : 64)}px;
  letter-spacing: -3.2px;
  word-spacing: 4px;
  color: #5b5951;
  text-align: ${(p) => (p.$center ? "center" : "left")};
  border-bottom: 2px solid #5b5951;
  -webkit-text-stroke: 0.3px currentColor;
`;

const Fields = styled.div`
  display: grid;
  grid-template-columns: 1fr 1fr;
  column-gap: 30px;
  row-gap: 20px;
  margin-top: 40px;
`;

const Field = styled.label<{ $wide?: boolean }>`
  display: flex;
  flex-direction: column;
  grid-column: ${(p) => (p.$wide ? "1 / -1" : "auto")};
  letter-spacing: -0.3px;
`;

const TextInput = styled.input`
  height: 80px;
  border: 2px solid #bbb;
  background: #fff;
  padding: 0 12px;
`;

const TextBox = styled.div`
  height: 460px;
  border: 2px solid #000;
  background: #fff;
  display: flex;
  align-items: flex-end;
  justify-content: flex-end;
`;

const Grip = styled.svg`
  width: 18px;
  height: 18px;
  stroke: #555;
  stroke-width: 1.6px;
`;

const SendButton = styled.button`
  margin-top: 30px;
  width: 256px;
  height: 94px;
  border: 0;
  background: #001e6a;
  color: #fff;
  font: 400 38px Lato, sans-serif;
  letter-spacing: -1.5px;
  -webkit-text-stroke: 0.4px currentColor;
`;

const InfoCard = styled.aside`
  width: 720px;
  height: 1042px;
  padding: 22px 30px 0;
  border: 2px solid #ddd;
  text-align: center;
`;

const Para = styled.p`
  margin-bottom: 20px;
  white-space: nowrap;
`;

const CardHeading = styled.h4<{ $first?: boolean }>`
  margin: ${(p) => (p.$first ? 40 : 29)}px 0 21px;
  font-size: 34px;
  line-height: 46px;
  -webkit-text-stroke: 0.6px currentColor;
  white-space: nowrap;
`;

const SmallTitle = styled.h4`
  margin-top: -5px;
  font-size: 20.5px;
  line-height: 30px;
  letter-spacing: -0.9px;
  color: #000;
  -webkit-text-stroke: 0.4px currentColor;
`;

const SmallIcons = styled.div`
  display: flex;
  justify-content: center;
  align-items: center;
  gap: 23px;
  height: 30px;
  margin-top: 24px;
  padding-right: 14px;
  color: #000;
`;

const IconCell = styled.a`
  display: flex;
  align-items: center;
  justify-content: center;
  width: 28px;
  height: 28px;
  color: inherit;
`;

/* ---------- footer ---------- */

const Footer = styled.footer`
  height: 792px;
  flex: none;
  display: flex;
  gap: 60px;
  padding: 62px 338px 0 340px;
  border-top: 10px solid #2c4e8c;
  background: #002775;
  position: relative;
  isolation: isolate;
  color: #fff;
  &::before {
    content: "";
    position: absolute;
    inset: 0;
    z-index: -1;
    background: #001e6a;
    clip-path: polygon(1397px 0, 100% 0, 100% 100%, 2179px 100%);
  }
`;

const FooterCol = styled.section`
  width: 720px;
`;

const FooterTitle = styled.h3`
  height: 70px;
  font-size: 46px;
  line-height: 54px;
  letter-spacing: -2.6px;
  border-bottom: 2px solid rgba(255, 255, 255, 0.4);
  -webkit-text-stroke: 0.6px currentColor;
`;

const LinkList = styled.ul`
  list-style: none;
  margin-top: 6px;
  font-size: 26px;
`;

const LinkItem = styled.li`
  display: flex;
  &::before {
    content: "";
    flex: none;
    width: 8px;
    height: 8px;
    margin: 32px 22px 0 0;
    background: #e2e2e2;
  }
`;

const LinkText = styled.span<{ $last: boolean }>`
  flex: 1;
  padding: 14px 80px 14px 0;
  letter-spacing: -0.1px;
  -webkit-text-stroke: 0.3px currentColor;
  border-bottom: 2px dashed ${(p) => (p.$last ? "transparent" : "rgba(90,130,190,.38)")};
`;

const Rounds = styled.div`
  display: flex;
  gap: 7px;
  margin: 20px 0;
`;

const Round = styled.a<{ $bg: string }>`
  display: flex;
  align-items: center;
  justify-content: center;
  width: 60px;
  height: 60px;
  border-radius: 50%;
  color: #fff;
  background: ${(p) => p.$bg};
`;

const FooterPara = styled(Para)`
  -webkit-text-stroke: 0.3px currentColor;
`;

const Bottom = styled.div`
  height: 160px;
  flex: none;
  padding-top: 20px;
  background: #00175a;
  color: #fff;
  text-align: center;
  display: flex;
  flex-direction: column;
  align-items: center;
  -webkit-text-stroke: 0.3px currentColor;
`;

const Copy = styled.div<{ $size?: number }>`
  font-size: ${(p) => p.$size ?? 28}px;
  letter-spacing: -0.45px;
  line-height: 40px;
  height: 39px;
  white-space: pre;
  display: flex;
  align-items: center;
`;

const Sup = styled.sup`
  font-size: 22px;
  line-height: 24px;
  margin: -10px 8px 0 0;
`;

const DevLink = styled.a`
  color: #2e6fd6;
  margin-left: 7px;
`;

const Counter = styled.span`
  display: flex;
  justify-content: space-between;
  width: 112px;
  height: 22px;
  margin-left: 8px;
  padding: 0 3px;
  background: #fff;
  color: #222;
  font: 700 19px/23px "Liberation Mono", monospace;
`;

const ChatButton = styled.button`
  position: absolute;
  right: 40px;
  bottom: 40px;
  width: 120px;
  height: 120px;
  border: 0;
  border-radius: 50%;
  background: #a8a797;
  box-shadow: 0 2px 10px rgba(0, 0, 0, 0.3);
  display: flex;
  align-items: center;
  justify-content: center;
`;

const Mail = styled.svg`
  width: 58px;
  height: 49px;
  margin-bottom: 6px;
  fill: none;
  stroke: #fff;
  stroke-width: 5.5px;
`;

const tours = [
  "Kathmandu, Pokhara, Chitwan, Dhulikhel & Nagarkot (9N/10D)", "Buddhist Pilgrimage Tour (8N/9D)", "Nepal Heritage Tour (7N/8D)", "Kathmandu, Pokhara & Chitwan (7N/8D)",
  "Kathmandu, Pokhara & Nagarkot (5N/6D)", "Pokhara & Chitwan (4N/5D)", "Patan",
];
const treks = ["Gorepani", "Annapurna Base Camp Trekking (ABC)", "Mountain", "Everest Base Camp Trekking"];

const rounds: [IconName, string][] = [
  ["facebook", "#3b5998"], ["twitter", "#2ea9e0"], ["gplus", "#c60e13"], ["youtube", "#c60e13"], ["linkedin", "#0077b5"], ["instagram", "#a53bb1"], ["pinterest", "#cb2027"],
];

const shares: [IconName, string][] = [
  ["facebook", "#3f5b99"], ["twitter", "#4ca6de"], ["gplus", "#db473a"], ["play", "#cb171f"], ["instagram", "#0d3a5d"],
];

function Links({ items }: { items: string[] }) {
  return (
    <LinkList>
      {items.map((item, i) => (
        <LinkItem key={item}><LinkText $last={i === items.length - 1}>{item}</LinkText></LinkItem>
      ))}
    </LinkList>
  );
}

export default function App() {
  return (
    <Page>
      <Global />
      <TopBar />
      <Header>
        <BrandLogo />
        <Nav>
          {navItems.map((item) => (
            <NavItem key={item.label} $active={item.active}>
              {item.label}
              {item.menu && <Caret viewBox="0 0 18 12"><path d="M2 2l7 7 7-7" /></Caret>}
            </NavItem>
          ))}
        </Nav>
      </Header>

      <MapArea>
        <Terrain />
        <Floating $x={20} $y={20} $w={338} $h={80}>
          <MapType $on $w={138}>Map</MapType>
          <MapType $w={200}>Satellite</MapType>
        </Floating>
        <Floating $x={2858} $y={20} $w={80} $h={80} />
        <Floating $x={2858} $y={546} $w={80} $h={80}>
          <Pegman viewBox="0 0 36 62">
            <path d="M11 20C5 22 3 34 2 43l4 2 3-8v22h8V45h2v14h8V37l3 8 4-2C33 34 31 22 25 20Z" fill="#fbbc2c" stroke="#7d7a75" strokeWidth="1.600" />
            <path d="M11 21l7 10 7-10Z" fill="#e8822c" />
            <circle cx="18" cy="11" r="10" fill="#fbbc2c" stroke="#7d7a75" strokeWidth="1.600" />
          </Pegman>
        </Floating>
        <Floating $x={2858} $y={690} $w={80} $h={162}>
          <ZoomStack>
            <ZoomKey viewBox="0 0 36 80"><path d="M0 36h36v8H0zM14 22h8v36h-8z" /></ZoomKey>
            <ZoomRule />
            <ZoomKey viewBox="0 0 36 80"><path d="M0 36h36v8H0z" /></ZoomKey>
          </ZoomStack>
        </Floating>
        <InfoWindow>
          <InfoTitle>Heavenly Travel &amp; Tours Pvt. Ltd.</InfoTitle>
          Thapathali<br />Kathmandu
          <InfoClose viewBox="0 0 17 17"><path d="M1 1l15 15M16 1L1 16" /></InfoClose>
        </InfoWindow>
        <MapTerms><span>Map data ©2019</span><span>Terms of Use</span></MapTerms>
      </MapArea>
      <MapCredit>maps generator</MapCredit>

      <Columns>
        <FormPanel>
          <PanelTitle>CONTACT US</PanelTitle>
          <Fields>
            <Field>Your Email (required)<TextInput /></Field>
            <Field>Your Name (required)<TextInput /></Field>
            <Field $wide>Subject<TextInput /></Field>
            <Field $wide>
              Your Message
              <TextBox><Grip viewBox="0 0 18 18"><path d="M2 16L16 2M10 16l6-6" /></Grip></TextBox>
            </Field>
          </Fields>
          <SendButton>SEND</SendButton>
        </FormPanel>

        <InfoCard>
          <PanelTitle $center>CONTACT INFO</PanelTitle>
          <CardHeading $first>Thapathali, Kathmandu, Nepal</CardHeading>
          <Para><Icon name="phone" />Phone :<a><Num>01-4240644/4101591, 9851208520 /</Num><br /><Num>9851227292</Num></a></Para>
          <Para><Icon name="envelope" /> Email : <a>heavenlytravel16@gmail.com,<br />info@heavenlytraveltours.com</a></Para>
          <Para><Icon name="globe" /> Website : <a>http://heavenlytraveltours.com/</a></Para>
          <CardHeading>For USA Contact</CardHeading>
          <Para><Num>4120 cove Ln Glenview 60025 Il</Num></Para>
          <Para>USA</Para>
          <Para><Icon name="phone" />Phone : <Num>17738278214</Num></Para>
          <CardHeading><Icon name="envelope" size={34} /> <a>heavenlytravel16@gmail.com,<br />info@heavenlytraveltours.com</a></CardHeading>
          <Para><Icon name="phone" /> <a><Num>01-4240644 / 4101591, 9851208520, 9851227292</Num></a></Para>
          <SmallTitle>STAY CONNECTED</SmallTitle>
          <SmallIcons>
            {rounds.map(([name]) => <IconCell key={name}><Icon name={name} size={26} /></IconCell>)}
          </SmallIcons>
        </InfoCard>
      </Columns>

      <Footer>
        <FooterCol><FooterTitle>TOURS</FooterTitle><Links items={tours} /></FooterCol>
        <FooterCol><FooterTitle>TREKKING</FooterTitle><Links items={treks} /></FooterCol>
        <FooterCol>
          <FooterTitle>STAY CONNECTED</FooterTitle>
          <Rounds>
            {rounds.map(([name, bg]) => <Round key={name} $bg={bg}><Icon name={name} /></Round>)}
          </Rounds>
          <FooterPara>
            Thapathali, Kathmandu, Nepal<br />
            <Icon name="phone" />Phone :<Num>01-4240644/4101591, 9851208520 / 9851227292</Num><br />
            <Icon name="envelope" /> Email : heavenlytravel16@gmail.com,<br />
            info@heavenlytraveltours.com<br />
            <Icon name="globe" /> Website : http://heavenlytraveltours.com/
          </FooterPara>
          <FooterPara>For USA Contact<br /><Num>4120 cove Ln Glenview 60025 Il</Num><br />USA<br /><Icon name="phone" />Phone : <Num>17738278214</Num></FooterPara>
          <FooterPara><Icon name="envelope" /> heavenlytravel16@gmail.com,<br />info@heavenlytraveltours.com<br /><Icon name="phone" /> <Num>01-4240644 / 4101591, 9851208520, 9851227292</Num></FooterPara>
        </FooterCol>
      </Footer>
      <Bottom>
        <Copy><Sup>©</Sup><Num>2019</Num> Heavenly Travel and Tours, Nepal. All Rights Reserved.</Copy>
        <Copy $size={24}>Developed by :-<DevLink>Sinuna Chaudary</DevLink></Copy>
        <Copy>Total Visitors:<Counter>{"000001875".split("").map((d, i) => <span key={i}>{d}</span>)}</Counter></Copy>
      </Bottom>

      <ShareBar>
        {shares.map(([name, bg]) => <ShareButton key={name} $bg={bg}><Icon name={name} size={name === "facebook" ? 34 : 30} /></ShareButton>)}
      </ShareBar>
      <ChatButton><Mail viewBox="0 0 58 49"><rect x="3" y="3" width="52" height="43" rx="5" /><path d="M5 9l24 19L53 9" /></Mail></ChatButton>
    </Page>
  );
}
